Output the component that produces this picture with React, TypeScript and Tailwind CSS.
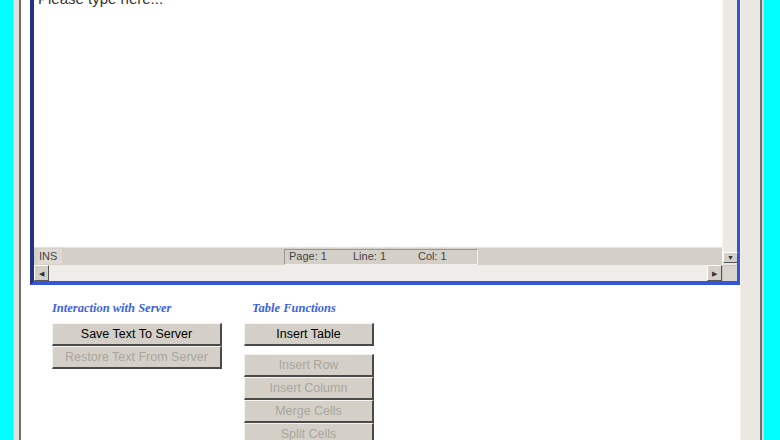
import React from 'react';

const Btn: React.FC<{ label: string; disabled?: boolean; w: string }> = ({ label, disabled, w }) => (
  <div
    className={`${w} h-[23px] flex items-center justify-center bg-[#d4d0c8] border-t border-l border-t-[#f6f4f0] border-l-[#f6f4f0] border-r-2 border-b-2 border-r-[#4a4a4a] border-b-[#4a4a4a] text-[12.5px] ${
      disabled ? 'text-[#aaa69e]' : 'text-black'
    }`}
  >
    {label}
  </div>
);

const ArrowBtn: React.FC<{ glyph: string; cls?: string }> = ({ glyph, cls }) => (
  <div
    className={`w-[15px] flex items-center justify-center bg-[#d4d0c8] border-t border-l border-t-white border-l-white border-r border-b border-r-[#555] border-b-[#555] text-[7px] leading-none text-[#333] ${cls ?? ''}`}
  >
    {glyph}
  </div>
);

const serif = { fontFamily: '"Liberation Serif", "Times New Roman", serif' };

const App: React.FC = () => {
  return (
    <div
      className="w-[780px] h-[440px] overflow-hidden flex bg-white"
      style={{ fontFamily: '"Liberation Sans", Arial, sans-serif' }}
    >
      {/* left frame */}
      <div className="w-[13px] bg-[#00ffff]" />
      <div className="w-[6px] bg-[#e3e0db] border-l border-[#c8c5c0]" />
      <div className="w-[2px] bg-[#6e6e6e]" />

      {/* content */}
      <div className="w-[719px] flex flex-col bg-white">
        {/* editor */}
        <div className="ml-[9px] h-[285px] flex flex-col border-l-4 border-l-[#24328a] border-r-[3px] border-r-[#3556d6] border-b-4 border-b-[#3556d6]">
          <div className="flex h-[265px]">
            <div className="flex-1 flex flex-col">
              <div className="flex-1 bg-white overflow-hidden">
                <div className="-mt-[10px] pl-[4px] text-[15px] leading-[18px] text-[#333]">Please type here...</div>
              </div>
              <div className="h-[18px] bg-[#d4d0c8] border-t border-[#e4e1dc] flex items-center text-[11px] text-[#444]">
                <div className="ml-[4px] w-[24px] h-[15px] bg-[#dedad3] flex items-center pl-[1px]">INS</div>
                <div className="ml-[222px] w-[194px] h-[16px] border border-t-[#9a978f] border-l-[#9a978f] border-r-[#f2f0ec] border-b-[#f2f0ec] flex items-center pl-[4px]">
                  <span className="w-[64px]">Page: 1</span>
                  <span className="w-[65px]">Line: 1</span>
                  <span>Col: 1</span>
                </div>
              </div>
            </div>
            <div className="w-[15px] bg-[#ece9e4] border-l border-[#f8f7f5] flex flex-col">
              <div className="flex-1" />
              <ArrowBtn glyph="▼" cls="h-[11px] w-[15px]" />
              <div className="h-[2px]" />
            </div>
          </div>
          <div className="flex h-[16px]">
            <div className="flex-1 bg-[#efede9] flex justify-between">
              <ArrowBtn glyph="◀" />
              <ArrowBtn glyph="▶" />
            </div>
            <div className="w-[15px] bg-[#d8d5cf] border-l border-t border-[#c4c1bb]" />
          </div>
        </div>

        {/* controls */}
        <div className="flex pl-[31px] pt-[16px] gap-[22px]">
          <div className="flex flex-col w-[170px]">
            <div className="h-[14px] text-[12.5px] italic font-bold text-[#3d63dc] leading-[14px]" style={serif}>
              Interaction with Server
            </div>
            <div className="mt-[8px] flex flex-col">
              <Btn label="Save Text To Server" w="w-[170px]" />
              <Btn label="Restore Text From Server" w="w-[170px]" disabled />
            </div>
          </div>
          <div className="flex flex-col w-[130px]">
            <div className="h-[14px] pl-[8px] text-[12.5px] italic font-bold text-[#3d63dc] leading-[14px]" style={serif}>
              Table Functions
            </div>
            <div className="mt-[8px] flex flex-col">
              <Btn label="Insert Table" w="w-[130px]" />
              <div className="h-[8px]" />
              <Btn label="Insert Row" w="w-[130px]" disabled />
              <Btn label="Insert Column" w="w-[130px]" disabled />
              <Btn label="Merge Cells" w="w-[130px]" disabled />
              <Btn label="Split Cells" w="w-[130px]" disabled />
            </div>
          </div>
        </div>
      </div>

      {/* right frame */}
      <div className="w-[20px] bg-[#ebe8e3] border-l border-[#f6f4f1]" />
      <div className="w-[2px] bg-[#6e6e6e]" />
      <div className="w-[2px] bg-[#d6d6d6]" />
      <div className="w-[16px] bg-[#00ffff]" />
    </div>
  );
};

export default App;
